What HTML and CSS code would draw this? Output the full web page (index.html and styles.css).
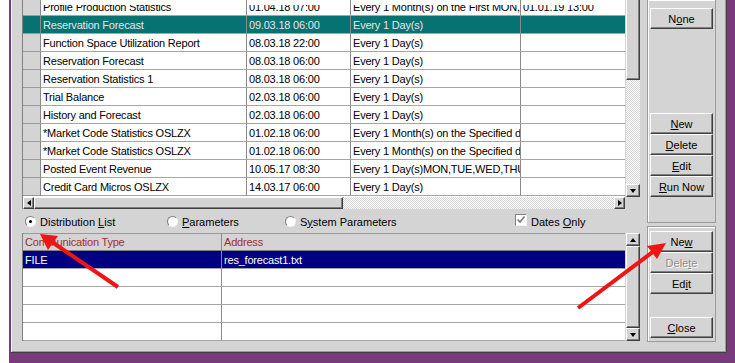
FILE: index.html
```html
<!DOCTYPE html>
<html lang="en">
<head>
    <meta charset="UTF-8">
    <title>Scheduled Reports</title>
    <link rel="stylesheet" href="styles.css">
</head>
<body>
    <div class="desk">
        <div class="win">
            <div class="main">
                <div class="top-area">
                    <div class="grid">
                        <div class="rows">
                            <div class="row cut"><div class="cell head"></div><div class="cell"><span>Profile Production Statistics</span></div><div class="cell"><span>01.04.18 07:00</span></div><div class="cell"><span>Every 1 Month(s) on the First MON,</span></div><div class="cell"><span>01.01.19 13:00</span></div></div>
                            <div class="row sel"><div class="cell head"></div><div class="cell">Reservation Forecast</div><div class="cell">09.03.18 06:00</div><div class="cell">Every 1 Day(s)</div><div class="cell"></div></div>
                            <div class="row"><div class="cell head"></div><div class="cell">Function Space Utilization Report</div><div class="cell">08.03.18 22:00</div><div class="cell">Every 1 Day(s)</div><div class="cell"></div></div>
                            <div class="row"><div class="cell head"></div><div class="cell">Reservation Forecast</div><div class="cell">08.03.18 06:00</div><div class="cell">Every 1 Day(s)</div><div class="cell"></div></div>
                            <div class="row"><div class="cell head"></div><div class="cell">Reservation Statistics 1</div><div class="cell">08.03.18 06:00</div><div class="cell">Every 1 Day(s)</div><div class="cell"></div></div>
                            <div class="row"><div class="cell head"></div><div class="cell">Trial Balance</div><div class="cell">02.03.18 06:00</div><div class="cell">Every 1 Day(s)</div><div class="cell"></div></div>
                            <div class="row"><div class="cell head"></div><div class="cell">History and Forecast</div><div class="cell">02.03.18 06:00</div><div class="cell">Every 1 Day(s)</div><div class="cell"></div></div>
                            <div class="row"><div class="cell head"></div><div class="cell">*Market Code Statistics OSLZX</div><div class="cell">01.02.18 06:00</div><div class="cell">Every 1 Month(s) on the Specified da</div><div class="cell"></div></div>
                            <div class="row"><div class="cell head"></div><div class="cell">*Market Code Statistics OSLZX</div><div class="cell">01.02.18 06:00</div><div class="cell">Every 1 Month(s) on the Specified da</div><div class="cell"></div></div>
                            <div class="row"><div class="cell head"></div><div class="cell">Posted Event Revenue</div><div class="cell">10.05.17 08:30</div><div class="cell">Every 1 Day(s)MON,TUE,WED,THU,</div><div class="cell"></div></div>
                            <div class="row"><div class="cell head"></div><div class="cell">Credit Card Micros OSLZX</div><div class="cell">14.03.17 06:00</div><div class="cell">Every 1 Day(s)</div><div class="cell"></div></div>
                        </div>
                    </div>
                    <div class="vscroll">
                        <div class="thumb v-top"></div>
                        <div class="track"></div>
                        <div class="sbtn"><span class="tri down"></span></div>
                    </div>
                </div>

                <div class="hbar">
                    <div class="hscroll">
                        <div class="sbtn"><span class="tri left"></span></div>
                        <div class="thumb h-thumb"></div>
                        <div class="track"></div>
                        <div class="sbtn"><span class="tri right"></span></div>
                    </div>
                    <div class="corner"></div>
                </div>

                <div class="options">
                    <label class="opt opt-dist"><span class="radio on"></span><span>Distribution <u>L</u>ist</span></label>
                    <label class="opt opt-par"><span class="radio"></span><span><u>P</u>arameters</span></label>
                    <label class="opt opt-sys"><span class="radio"></span><span>S<u>y</u>stem Parameters</span></label>
                    <label class="opt">
                        <span class="check">
                            <svg width="10" height="10" viewBox="0 0 10 10"><polyline points="1.5,4.5 4,7 8.5,1.5" fill="none" stroke="#7a7a7a" stroke-width="1.6"/></svg>
                        </span><span>Dates <u>O</u>nly</span>
                    </label>
                </div>

                <div class="bottom-area">
                    <div class="dist">
                        <div class="drow dhead"><div class="cell">Communication Type</div><div class="cell">Address</div></div>
                        <div class="drow nav"><div class="cell">FILE</div><div class="cell">res_forecast1.txt</div></div>
                        <div class="drow"><div class="cell"></div><div class="cell"></div></div>
                        <div class="drow"><div class="cell"></div><div class="cell"></div></div>
                        <div class="drow"><div class="cell"></div><div class="cell"></div></div>
                        <div class="drow"><div class="cell"></div><div class="cell"></div></div>
                    </div>
                    <div class="vscroll">
                        <div class="sbtn"><span class="tri up"></span></div>
                        <div class="thumb v-full"></div>
                        <div class="sbtn"><span class="tri down"></span></div>
                    </div>
                </div>
            </div>

            <div class="side">
                <div class="panel panel-top">
                    <button class="btn btn-none">N<u>o</u>ne</button>
                    <button class="btn btn-first"><u>N</u>ew</button>
                    <button class="btn"><u>D</u>elete</button>
                    <button class="btn"><u>E</u>dit</button>
                    <button class="btn"><u>R</u>un Now</button>
                </div>
                <div class="panel panel-bottom">
                    <button class="btn">Ne<u>w</u></button>
                    <button class="btn off">Dele<u>t</u>e</button>
                    <button class="btn">Ed<u>i</u>t</button>
                    <button class="btn btn-close"><u>C</u>lose</button>
                </div>
            </div>
        </div>
    </div>

    <svg class="marks" width="735" height="363" viewBox="0 0 735 363">
        <line x1="118" y1="287" x2="52" y2="242" stroke="#f01414" stroke-width="4"/>
        <polygon points="40,234 58,236 48,250" fill="#f01414"/>
        <line x1="578" y1="308" x2="654" y2="251" stroke="#f01414" stroke-width="4"/>
        <polygon points="666,243 657,259 647,246" fill="#f01414"/>
    </svg>
</body>
</html>
```

FILE: styles.css
```css
body {
    margin: 0;
    width: 735px;
    height: 363px;
    overflow: hidden;
    background: #ffffff;
    font-family: "Liberation Sans", Arial, sans-serif;
    font-size: 11px;
    color: #000;
    position: relative;
}
.desk {
    margin-left: 9px;
    height: 363px;
    background: #783a7c;
    padding: 0 8px 10px 2px;
    box-sizing: border-box;
}
.win {
    height: 353px;
    background: #d4d4d4;
    box-sizing: border-box;
    border-bottom: 1px solid #404040;
    border-right: 1px solid #404040;
    box-shadow: inset 1px 0 #ffffff, inset -1px -1px #9a9a9a;
    display: flex;
    padding-left: 11px;
}
.main {
    width: 618px;
    display: flex;
    flex-direction: column;
}

/* top grid */
.top-area {
    height: 197px;
    display: flex;
}
.grid {
    width: 603px;
    height: 197px;
    overflow: hidden;
    background: #ffffff;
    border-left: 1px solid #808080;
    box-sizing: border-box;
}
.rows {
    margin-top: -2px;
}
.row {
    display: grid;
    grid-template-columns: 18px 206px 104px 170px 104px;
}
.cell {
    height: 18px;
    box-sizing: border-box;
    border-right: 1px solid #8a8a8a;
    border-bottom: 1px solid #a6a6a6;
    padding: 2px 0 0 2px;
    line-height: 15px;
    white-space: nowrap;
    overflow: hidden;
    letter-spacing: -0.2px;
}
.cell:last-child {
    border-right: none;
}
.cell.head {
    background: #d4d4d4;
    border-bottom-color: #9a9a9a;
}
.row.cut .cell span {
    display: block;
    clip-path: inset(5px 0 0 0);
}
.row.sel .cell {
    background: #067272;
    color: #e6e6e6;
}

/* scrollbars */
.vscroll {
    width: 15px;
    display: flex;
    flex-direction: column;
    background: #d4d4d4;
    border-left: 1px solid #d4d4d4;
    box-sizing: border-box;
}
.thumb, .sbtn {
    background: #d4d4d4;
    box-sizing: border-box;
    border: 1px solid;
    border-color: #ffffff #404040 #404040 #ffffff;
    box-shadow: inset -1px -1px #808080;
}
.sbtn {
    display: flex;
    align-items: center;
    justify-content: center;
    flex: none;
}
.vscroll .sbtn {
    height: 13px;
}
.v-top {
    height: 80px;
    border-top: none;
}
.v-full {
    flex: 1;
}
.track {
    flex: 1;
    background: repeating-conic-gradient(#ffffff 0 25%, #d4d4d4 0 50%) 0 0 / 2px 2px;
}
.tri {
    width: 0;
    height: 0;
    border: 3px solid transparent;
}
.tri.down {
    border-top: 4px solid #000;
    border-bottom: none;
    margin-top: 1px;
}
.tri.up {
    border-bottom: 4px solid #000;
    border-top: none;
}
.tri.left {
    border-right: 4px solid #000;
    border-left: none;
}
.tri.right {
    border-left: 4px solid #000;
    border-right: none;
}
.hbar {
    display: flex;
    height: 12px;
}
.hscroll {
    width: 603px;
    display: flex;
    border-left: 1px solid #808080;
    box-sizing: border-box;
}
.hscroll .sbtn {
    width: 11px;
}
.h-thumb {
    width: 309px;
}
.corner {
    flex: 1;
}

/* option row */
.options {
    height: 24px;
    display: flex;
    align-items: center;
    padding-left: 3px;
    padding-top: 1px;
    box-sizing: border-box;
}
.opt {
    display: flex;
    align-items: center;
    gap: 4px;
    white-space: nowrap;
}
.opt-dist { width: 142px; }
.opt-par { width: 118px; }
.opt-sys { width: 230px; }
.radio {
    width: 11px;
    height: 11px;
    border-radius: 50%;
    background: #ffffff;
    box-sizing: border-box;
    border: 1px solid;
    border-color: #808080 #f4f4f4 #f4f4f4 #808080;
    display: flex;
    align-items: center;
    justify-content: center;
}
.radio.on::after {
    content: "";
    width: 3px;
    height: 3px;
    border-radius: 50%;
    background: #000;
}
.check {
    width: 12px;
    height: 12px;
    background: #ffffff;
    box-sizing: border-box;
    border: 1px solid;
    border-color: #808080 #f4f4f4 #f4f4f4 #808080;
    display: flex;
    align-items: center;
    justify-content: center;
    margin-top: -4px;
}

/* bottom grid */
.bottom-area {
    height: 108px;
    display: flex;
}
.dist {
    width: 603px;
    background: #ffffff;
    border-left: 1px solid #808080;
    box-sizing: border-box;
}
.drow {
    display: grid;
    grid-template-columns: 199px 403px;
}
.dhead .cell {
    background: #d4d4d4;
    color: #9c2f2f;
    border-top: 1px solid #9a9a9a;
    border-bottom-color: #808080;
    padding-top: 1px;
}
.nav .cell {
    background: #000080;
    color: #ffffff;
}

/* button panels */
.side {
    width: 69px;
    margin-left: 7px;
    display: flex;
    flex-direction: column;
}
.panel {
    box-sizing: border-box;
    border: 1px solid #9a9a9a;
    box-shadow: inset 1px 1px #ffffff;
    padding: 0 2px 0 1px;
    display: flex;
    flex-direction: column;
}
.panel-top {
    height: 223px;
    border-top: none;
    padding-top: 8px;
}
.panel-bottom {
    margin-top: 3px;
    height: 116px;
    padding-top: 4px;
}
.btn {
    width: 63px;
    height: 21px;
    margin-left: 1px;
    padding: 0;
    background: #d4d4d4;
    font-family: "Liberation Sans", Arial, sans-serif;
    font-size: 11px;
    color: #000;
    box-sizing: border-box;
    border: 1px solid;
    border-color: #ffffff #404040 #404040 #ffffff;
    box-shadow: inset -1px -1px #808080;
    text-align: center;
    flex: none;
}
.btn-first {
    margin-top: 84px;
}
.btn-close {
    margin-top: 23px;
}
.btn.off {
    color: #8e8e8e;
    text-shadow: 1px 1px #ffffff;
}

.marks {
    position: absolute;
    top: 0;
    left: 0;
    pointer-events: none;
}
```
